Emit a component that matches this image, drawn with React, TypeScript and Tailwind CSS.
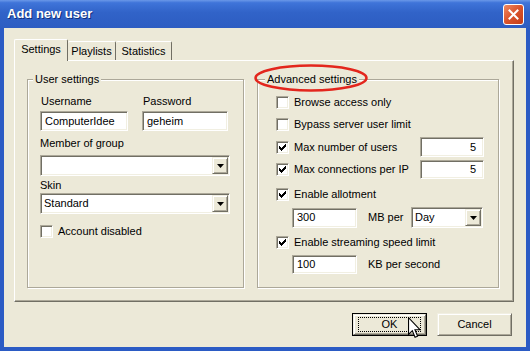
import React from "react";

const sunken =
  "border border-t-[#aca899] border-l-[#aca899] border-r-white border-b-white shadow-[inset_1px_1px_0_#716f64,inset_-1px_-1px_0_#f1efe2]";
const raised =
  "border border-t-[#f1efe2] border-l-[#f1efe2] border-r-[#716f64] border-b-[#716f64] shadow-[inset_1px_1px_0_#ffffff,inset_-1px_-1px_0_#aca899]";

function Check({ checked }: { checked?: boolean }) {
  return (
    <span className={`w-[13px] h-[13px] bg-white shrink-0 flex items-center justify-center ${sunken}`}>
      {checked && (
        <svg width="7" height="7" viewBox="0 0 7 7" shapeRendering="crispEdges">
          <path d="M6 0h1v1h-1zM5 1h2v1h-2zM0 2h1v1h-1zM4 2h3v1h-3zM0 3h2v1h-2zM3 3h3v1h-3zM0 4h5v1h-5zM1 5h3v1h-3zM2 6h1v1h-1z" fill="#000" />
        </svg>
      )}
    </span>
  );
}

function Select({ value, w }: { value: string; w: string }) {
  return (
    <div className={`h-[21px] bg-white flex items-stretch ${sunken} ${w}`}>
      <span className="flex-1 pl-[3px] flex items-center">{value}</span>
      <span className={`w-[16px] my-[1px] mr-[1px] bg-[#ece9d8] flex items-center justify-center ${raised}`}>
        <svg width="7" height="4" viewBox="0 0 7 4">
          <path d="M0 0h7l-3.5 4z" fill="#000" />
        </svg>
      </span>
    </div>
  );
}

function Input({ value, w, h, right }: { value: string; w: string; h: string; right?: boolean }) {
  return (
    <div className={`bg-white flex items-center ${sunken} ${w} ${h} ${right ? "justify-end pr-[7px]" : "pl-[4px]"}`}>
      {value}
    </div>
  );
}

function CheckRow({ label, checked, children }: { label: string; checked?: boolean; children?: React.ReactNode }) {
  return (
    <div className="h-[22px] flex items-center">
      <div className="min-w-[144px] flex items-center gap-[5px] whitespace-nowrap">
        <Check checked={checked} />
        <span>{label}</span>
      </div>
      {children}
    </div>
  );
}

export default function App() {
  return (
    <div
      className="relative w-[530px] h-[351px] bg-[#2b5bc4] flex flex-col overflow-hidden text-[11px] text-black"
      style={{ fontFamily: '"Liberation Sans", Arial, sans-serif' }}
    >
      {/* Title bar */}
      <div className="h-[28px] shrink-0 flex items-center justify-between pl-[7px] pr-[6px] bg-[linear-gradient(to_bottom,#6a98e8_0%,#3f74d9_10%,#3163c8_45%,#2d5dc2_100%)]">
        <span className="text-white font-bold text-[13px] [text-shadow:1px_1px_0_#0f2f7a]">Add new user</span>
        <span className="w-[21px] h-[21px] rounded-[3px] border border-white bg-[linear-gradient(135deg,#f08a62_0%,#d9532c_50%,#c43d17_100%)] flex items-center justify-center">
          <svg width="11" height="11" viewBox="0 0 11 11">
            <path d="M1.5 1.5l8 8M9.5 1.5l-8 8" stroke="#fff" strokeWidth="2" strokeLinecap="square" />
          </svg>
        </span>
      </div>

      {/* Body */}
      <div className="flex-1 mx-[4px] mb-[4px] bg-[#ece9d8] flex flex-col">
        {/* Tabs */}
        <div className="ml-[10px] mt-[10px] h-[22px] flex items-end relative z-10">
          <div className="w-[54px] h-[22px] bg-[#ece9d8] border-t border-l border-white border-r-[#716f64] border-r rounded-t-[2px] flex items-center justify-center -mb-px pb-[2px]">
            Settings
          </div>
          <div className="w-[48px] h-[19px] border-t border-white border-r border-r-[#716f64] rounded-t-[2px] flex items-center justify-center">
            Playlists
          </div>
          <div className="w-[56px] h-[19px] border-t border-white border-r border-r-[#716f64] rounded-t-[2px] flex items-center justify-center">
            Statistics
          </div>
        </div>

        {/* Panel */}
        <div className="ml-[10px] w-[500px] h-[242px] border-t border-l border-white border-r border-b border-r-[#716f64] border-b-[#716f64] shadow-[inset_-1px_-1px_0_#aca899] flex gap-[13px] pl-[12px] pt-[18px]">
          {/* User settings */}
          <div className="relative w-[217px] h-[209px] border border-[#aca899] shadow-[inset_1px_1px_0_#fff,1px_1px_0_#fff] flex flex-col pl-[12px] pt-[14px]">
            <span className="absolute -top-[8px] left-[5px] bg-[#ece9d8] px-[2px] leading-[14px]">User settings</span>
            <div className="flex gap-[14px]">
              <div className="flex flex-col">
                <span className="leading-[14px] pl-[1px]">Username</span>
                <div className="mt-[3px]">
                  <Input value="ComputerIdee" w="w-[88px]" h="h-[20px]" />
                </div>
              </div>
              <div className="flex flex-col">
                <span className="leading-[14px] pl-[1px]">Password</span>
                <div className="mt-[3px]">
                  <Input value="geheim" w="w-[86px]" h="h-[20px]" />
                </div>
              </div>
            </div>
            <span className="leading-[14px] mt-[5px]">Member of group</span>
            <div className="mt-[5px]">
              <Select value="" w="w-[190px]" />
            </div>
            <span className="leading-[14px] mt-[2px]">Skin</span>
            <div className="mt-[1px]">
              <Select value="Standard" w="w-[190px]" />
            </div>
            <div className="mt-[9px] flex items-center gap-[5px]">
              <Check />
              <span>Account disabled</span>
            </div>
          </div>

          {/* Advanced settings */}
          <div className="relative w-[242px] h-[209px] border border-[#aca899] shadow-[inset_1px_1px_0_#fff,1px_1px_0_#fff] flex flex-col pl-[18px] pt-[11px]">
            <span className="absolute -top-[8px] left-[7px] bg-[#ece9d8] px-[2px] leading-[14px]">Advanced settings</span>
            <CheckRow label="Browse access only" />
            <CheckRow label="Bypass server user limit" />
            <div className="mt-[1px]">
              <CheckRow label="Max number of users" checked>
                <Input value="5" w="w-[64px]" h="h-[20px]" right />
              </CheckRow>
            </div>
            <CheckRow label="Max connections per IP" checked>
              <Input value="5" w="w-[64px]" h="h-[19px]" right />
            </CheckRow>
            <div className="mt-[3px]">
              <CheckRow label="Enable allotment" checked />
            </div>
            <div className="mt-[2px] ml-[16px] flex items-center">
              <Input value="300" w="w-[65px]" h="h-[20px]" />
              <span className="ml-[11px] w-[43px]">MB per</span>
              <Select value="Day" w="w-[72px]" />
            </div>
            <div className="mt-[3px]">
              <CheckRow label="Enable streaming speed limit" checked />
            </div>
            <div className="mt-[2px] ml-[16px] flex items-center">
              <Input value="100" w="w-[65px]" h="h-[19px]" />
              <span className="ml-[11px]">KB per second</span>
            </div>
          </div>
        </div>

        {/* Buttons */}
        <div className="mt-[11px] flex justify-end gap-[10px] pr-[14px]">
          <div className="w-[75px] h-[23px] border border-black">
            <div className={`w-full h-full bg-[#ece9d8] flex items-center justify-center ${raised}`}>
              <div className="w-[63px] h-[15px] border border-dotted border-black flex items-center justify-center">OK</div>
            </div>
          </div>
          <div className={`w-[75px] h-[23px] bg-[#ece9d8] flex items-center justify-center ${raised}`}>Cancel</div>
        </div>
      </div>

      {/* Red annotation ellipse */}
      <svg className="absolute left-[253px] top-[63px]" width="116" height="30" viewBox="0 0 116 30">
        <ellipse cx="58" cy="15" rx="55.5" ry="12.5" fill="none" stroke="#e3261d" strokeWidth="2.5" />
      </svg>

      {/* Mouse cursor */}
      <svg className="absolute left-[408px] top-[317px]" width="13" height="22" viewBox="0 0 12 20">
        <path d="M0.5 0.5 L0.5 16 L4 12.5 L6.5 18.5 L8.8 17.5 L6.4 11.6 L11 11.6 Z" fill="#fff" stroke="#000" strokeWidth="1" strokeLinejoin="miter" />
      </svg>
    </div>
  );
}
